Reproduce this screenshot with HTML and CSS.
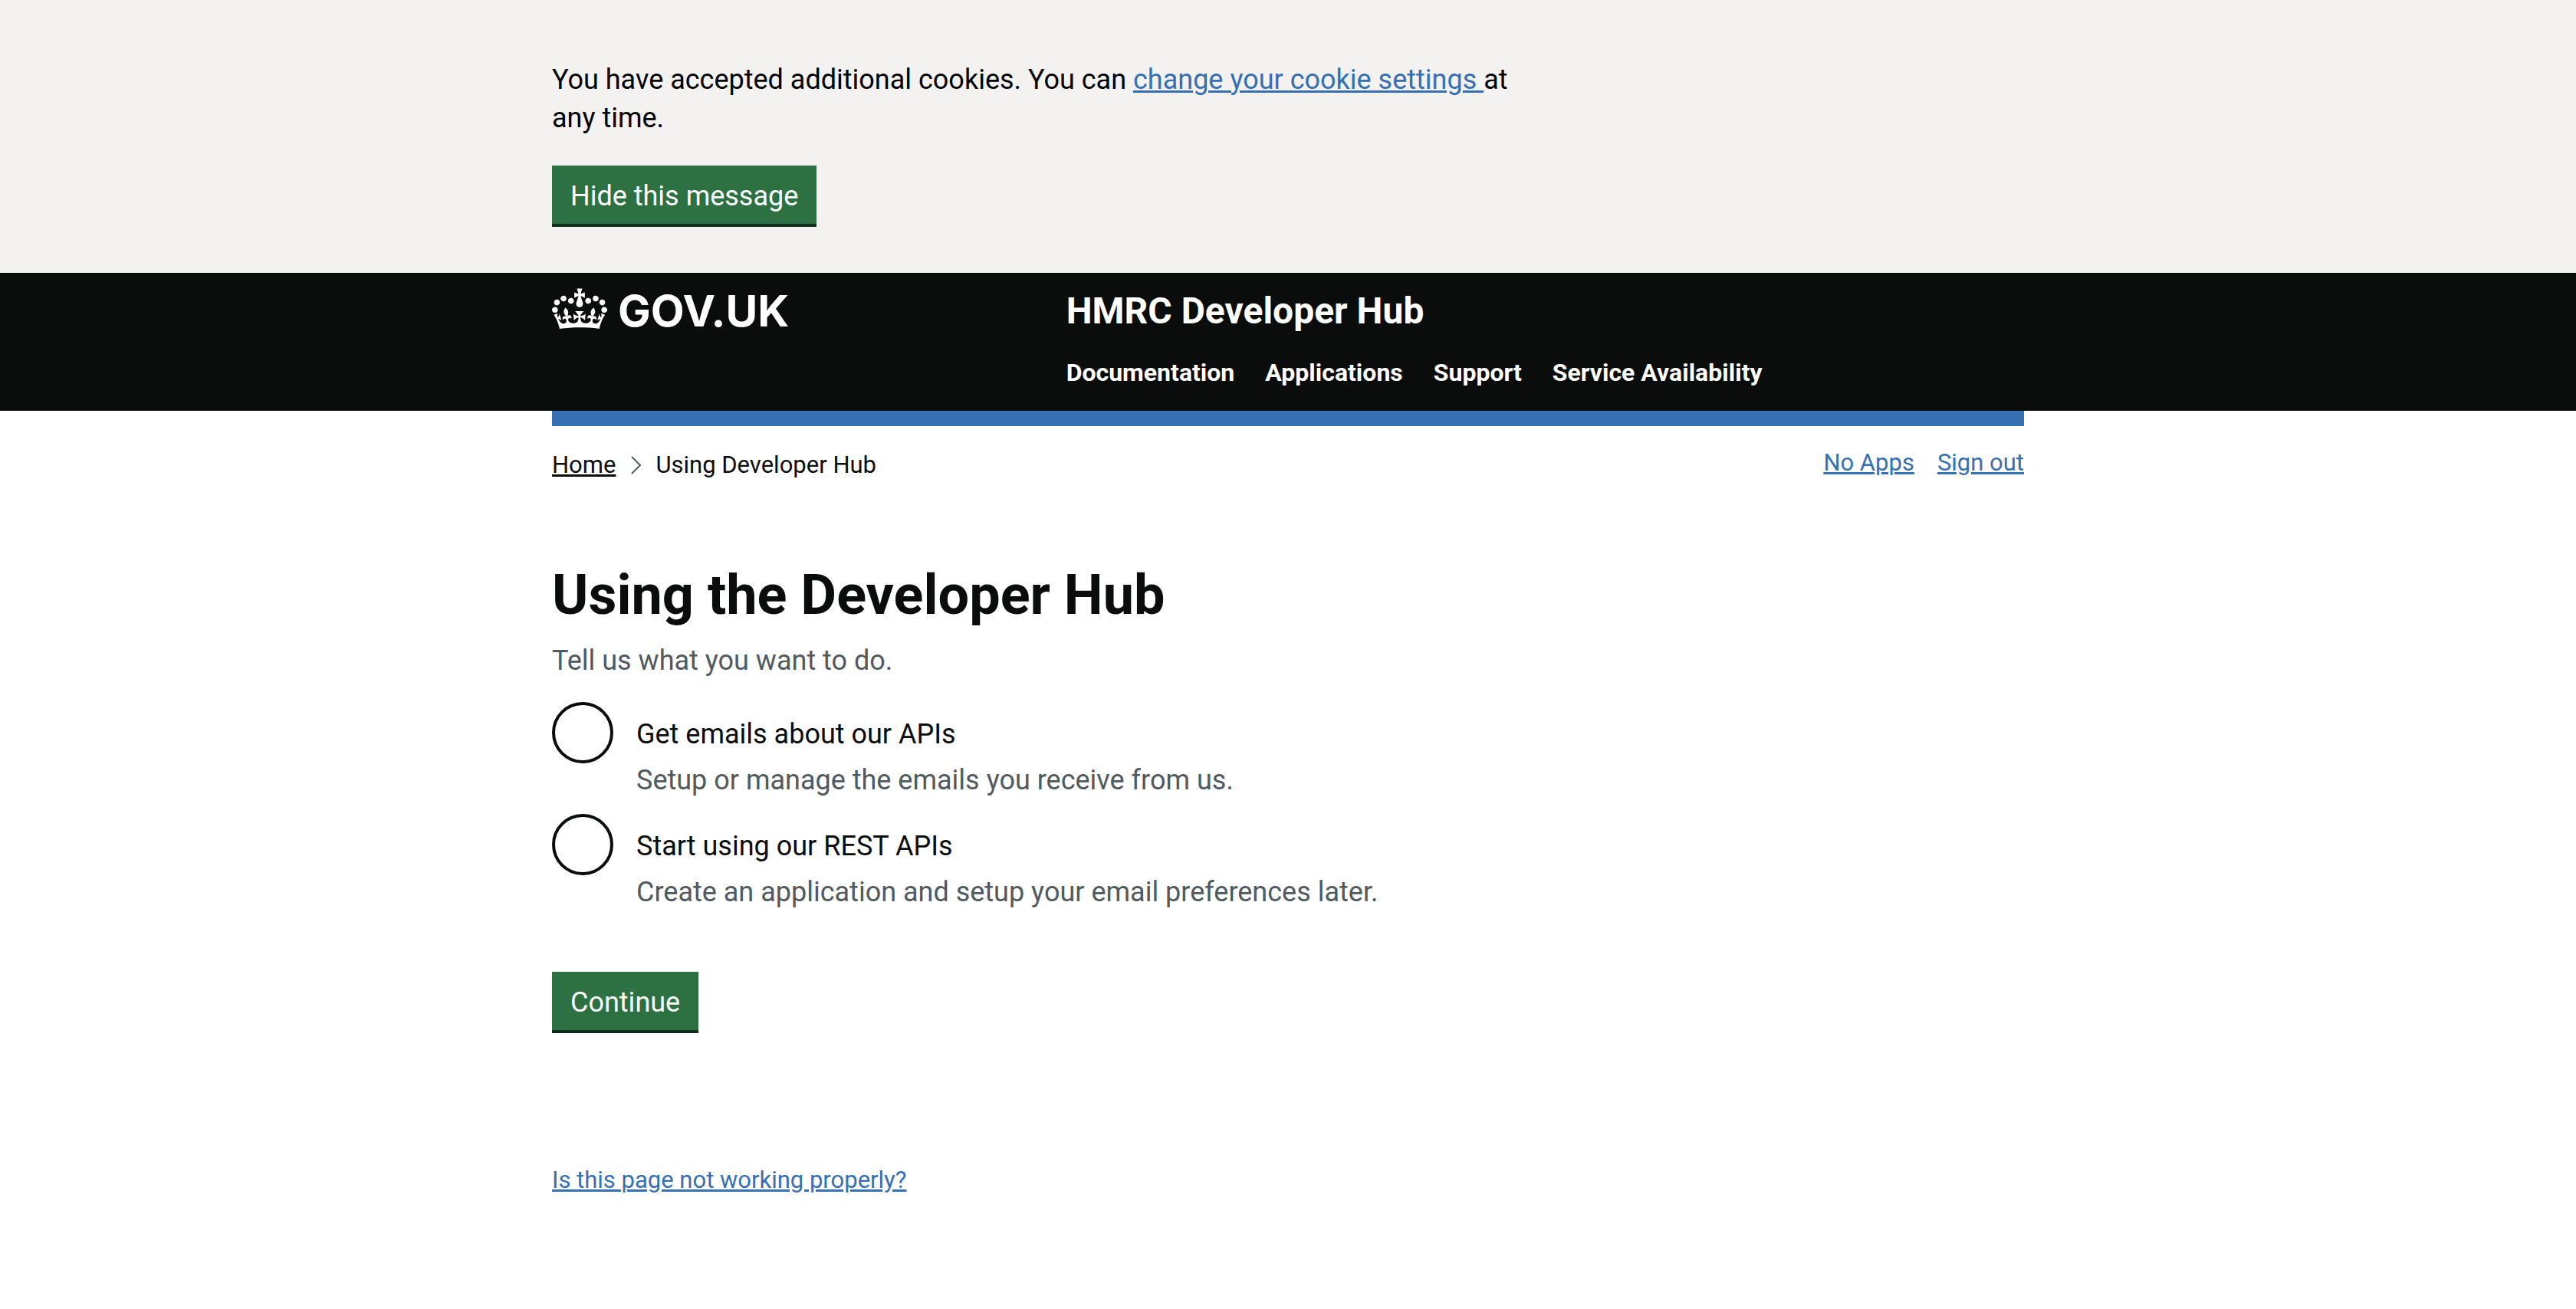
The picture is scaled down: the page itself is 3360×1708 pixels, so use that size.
FILE: index.html
```html
<!DOCTYPE html>
<html lang="en">
<head>
<meta charset="utf-8">
<meta name="viewport" content="width=device-width, initial-scale=1">
<title>Using Developer Hub - HMRC Developer Hub - GOV.UK</title>
<link rel="stylesheet" href="styles.css">
</head>
<body>
<section class="cookie-banner" aria-label="Cookies">
  <div class="container">
    <p class="cookie-message">You have accepted additional cookies. You can <a class="link" href="#cookies">change your cookie settings </a>at any time.</p>
    <button class="button" type="button">Hide this message</button>
  </div>
</section>

<header class="header">
  <div class="container header-grid">
    <a class="logo" href="#govuk">
      <svg class="crown" viewBox="0 0 132 97" aria-hidden="true" focusable="false"><path fill="currentColor" d="M25 30.2c3.5 1.5 7.7-.2 9.1-3.7 1.5-3.6-.2-7.8-3.9-9.2-3.6-1.4-7.6.3-9.1 3.9-1.4 3.5.3 7.5 3.9 9zM9 39.5c3.6 1.5 7.8-.2 9.2-3.7 1.5-3.6-.2-7.8-3.9-9.1-3.6-1.5-7.6.2-9.1 3.8-1.4 3.5.3 7.5 3.8 9zM4.4 57.2c3.5 1.5 7.7-.2 9.1-3.8 1.5-3.6-.2-7.7-3.9-9.1-3.5-1.5-7.6.3-9.1 3.8-1.4 3.5.3 7.6 3.9 9.1zm38.3-21.4c3.5 1.5 7.7-.2 9.1-3.8 1.5-3.6-.2-7.7-3.9-9.1-3.6-1.5-7.6.3-9.1 3.8-1.3 3.6.4 7.7 3.9 9.1zm64.4-5.6c-3.6 1.5-7.8-.2-9.1-3.7-1.5-3.6.2-7.8 3.8-9.2 3.6-1.4 7.7.3 9.2 3.9 1.3 3.5-.4 7.5-3.9 9zm15.9 9.3c-3.6 1.5-7.7-.2-9.1-3.7-1.5-3.6.2-7.8 3.7-9.1 3.6-1.5 7.7.2 9.2 3.8 1.5 3.5-.3 7.5-3.8 9zm4.7 17.7c-3.6 1.5-7.8-.2-9.2-3.8-1.5-3.6.2-7.7 3.9-9.1 3.6-1.5 7.7.3 9.2 3.8 1.3 3.5-.4 7.6-3.9 9.1zM89.3 35.8c-3.6 1.5-7.8-.2-9.2-3.8-1.4-3.6.2-7.7 3.9-9.1 3.6-1.5 7.7.3 9.2 3.8 1.4 3.6-.3 7.7-3.9 9.1zM69.7 17.7l8.9 4.7V9.3l-8.9 2.8c-.2-.3-.5-.6-.9-.9L72.4 0H59.6l3.5 11.2c-.3.3-.6.5-.9.9l-8.8-2.8v13.1l8.8-4.7c.3.3.6.7.9.9l-5 15.4v.1c-.2.8-.4 1.6-.4 2.4 0 4.1 3.1 7.5 7 8.1h.2c.3 0 .7.1 1 .1.4 0 .7 0 1-.1h.2c4-.6 7.1-4.1 7.1-8.1 0-.8-.1-1.7-.4-2.4V34l-5.1-15.4c.4-.2.7-.6 1-.9zM66 92.8c16.9 0 32.8 1.1 47.1 3.2 4-16.9 8.9-26.7 14-33.5l-9.6-3.4c1 4.9 1.1 7.2 0 10.2-1.5-1.4-3-4.3-4.2-8.7L108.6 76c2.8-2 5-3.2 7.5-3.3-4.4 9.4-10 11.9-13.6 11.2-4.3-.8-6.3-4.6-5.6-7.9 1-4.7 5.7-5.9 8-.5 4.3-8.7-3-11.4-7.6-8.8 7.1-7.2 7.9-13.5 2.1-21.1-8 6.1-8.1 12.3-4.5 20.8-4.7-5.4-12.1-2.5-9.5 6.2 3.4-5.2 7.9-2 7.2 3.1-.6 4.3-6.4 7.8-13.5 7.2-10.3-.9-10.9-8-11.2-13.8 2.5-.5 7.1 1.8 11 7.3L80.2 60c-4.1 4.4-8 5.3-12.3 5.4 1.4-4.4 8-11.6 8-11.6H55.5s6.4 7.2 7.9 11.6c-4.2-.1-8-1-12.3-5.4l1.4 16.4c3.9-5.5 8.5-7.7 10.9-7.3-.3 5.8-.9 12.8-11.1 13.8-7.2.6-12.9-2.9-13.5-7.2-.7-5 3.8-8.3 7.1-3.1 2.7-8.7-4.6-11.6-9.4-6.2 3.7-8.5 3.6-14.7-4.6-20.8-5.8 7.6-5 13.9 2.2 21.1-4.7-2.6-11.9.1-7.7 8.8 2.3-5.5 7.1-4.2 8.1.5.7 3.3-1.3 7.1-5.7 7.9-3.5.7-9-1.8-13.5-11.2 2.5.1 4.7 1.3 7.5 3.3l-4.7-15.4c-1.2 4.4-2.7 7.2-4.3 8.7-1.1-3-.9-5.3 0-10.2l-9.5 3.4c5 6.9 9.9 16.7 14 33.5 14.8-2.1 30.8-3.2 47.7-3.2z"/></svg>
      <span>GOV.UK</span>
    </a>
    <div class="header-content">
      <a class="service-name" href="#hub">HMRC Developer Hub</a>
      <nav aria-label="Main menu">
        <ul class="main-nav">
          <li><a href="#documentation">Documentation</a></li>
          <li><a href="#applications">Applications</a></li>
          <li><a href="#support">Support</a></li>
          <li><a href="#availability">Service Availability</a></li>
        </ul>
      </nav>
    </div>
  </div>
</header>

<div class="container page">
  <div class="top-row">
    <nav aria-label="Breadcrumb">
      <ol class="breadcrumbs">
        <li><a href="#home">Home</a></li>
        <li>
          <svg class="chevron" viewBox="0 0 14 24" aria-hidden="true" focusable="false"><path d="M1 1l11 11L1 23" fill="none" stroke="currentColor" stroke-width="2"/></svg>
          Using Developer Hub
        </li>
      </ol>
    </nav>
    <nav aria-label="Account">
      <ul class="user-nav">
        <li><a class="link" href="#apps">No Apps</a></li>
        <li><a class="link" href="#signout">Sign out</a></li>
      </ul>
    </nav>
  </div>

  <main>
    <h1 id="title">Using the Developer Hub</h1>
    <form>
      <p class="hint intro" id="intro">Tell us what you want to do.</p>
      <div class="radios" role="radiogroup" aria-labelledby="title" aria-describedby="intro">
        <div class="radio-item">
          <input class="radio" type="radio" id="emails" name="choice" value="emails" aria-describedby="emails-hint">
          <div class="radio-text">
            <label for="emails">Get emails about our APIs</label>
            <div class="hint" id="emails-hint">Setup or manage the emails you receive from us.</div>
          </div>
        </div>
        <div class="radio-item">
          <input class="radio" type="radio" id="rest" name="choice" value="rest" aria-describedby="rest-hint">
          <div class="radio-text">
            <label for="rest">Start using our REST APIs</label>
            <div class="hint" id="rest-hint">Create an application and setup your email preferences later.</div>
          </div>
        </div>
      </div>
      <button class="button" type="submit">Continue</button>
    </form>
    <p class="report"><a class="link" href="#report">Is this page not working properly?</a></p>
  </main>
</div>
</body>
</html>
```
FILE: styles.css
```css
* {
  box-sizing: border-box;
}

body {
  margin: 0;
  background: #fff;
  color: #0b0c0c;
  font: 36px/50px Roboto, "Liberation Sans", sans-serif;
}

p,
h1,
ul,
ol {
  margin: 0;
  padding: 0;
}

ul,
ol {
  list-style: none;
}

a {
  text-decoration-thickness: 3px;
  text-underline-offset: 2px;
}

.link {
  color: #3670b3;
}

.container {
  max-width: 1920px;
  margin: 0 auto;
}

.button {
  display: block;
  padding: 15px 24px 11px;
  border: 0;
  border-bottom: 4px solid #0f2e1b;
  border-radius: 0;
  background: #2d7042;
  color: #fff;
  font: inherit;
}

/* Cookie banner */
.cookie-banner {
  padding: 79px 0 60px;
  background: #f3f2f0;
  color: #000;
}

.cookie-message {
  max-width: 1270px;
  margin-bottom: 37px;
}

/* Header */
.header {
  padding: 20px 0 30px;
  background: #0b0c0c;
  color: #fff;
  font-weight: 700;
}

.header a {
  color: inherit;
  text-decoration: none;
}

.header-grid {
  display: grid;
  grid-template-columns: 1fr 2fr;
  column-gap: 46px;
}

.logo {
  display: flex;
  align-items: flex-start;
  gap: 14px;
  font: 700 57px/60px Inter, "Liberation Sans", sans-serif;
}

.crown {
  width: 72px;
  height: 54px;
}

.header-content {
  display: grid;
  row-gap: 30px;
  justify-items: start;
}

.service-name {
  font-size: 48px;
  line-height: 60px;
}

.main-nav {
  display: flex;
  flex-wrap: wrap;
  column-gap: 40px;
  font-size: 32px;
  line-height: 40px;
}

/* Page */
.page {
  border-top: 20px solid #3670b3;
}

.top-row {
  display: flex;
  justify-content: space-between;
  align-items: flex-start;
  padding-top: 30px;
  font-size: 31px;
}

.breadcrumbs {
  display: flex;
  gap: 20px;
  line-height: 42px;
}

.breadcrumbs li {
  display: flex;
  align-items: center;
  gap: 18px;
}

.breadcrumbs a {
  color: inherit;
}

.chevron {
  width: 14px;
  height: 24px;
  color: #505a5f;
}

.user-nav {
  display: flex;
  gap: 30px;
  line-height: 36px;
}

h1 {
  margin-top: 109px;
  font-size: 72px;
  line-height: 80px;
}

.hint {
  color: #505a5f;
}

.intro {
  margin: 20px 0 29px;
}

.radios {
  display: grid;
  row-gap: 19px;
  margin-bottom: 79px;
}

.radio-item {
  display: flex;
  align-items: flex-start;
  gap: 30px;
}

.radio {
  appearance: none;
  flex: none;
  width: 80px;
  height: 80px;
  margin: 0;
  border: 4px solid #0b0c0c;
  border-radius: 50%;
}

.radio:checked {
  background: radial-gradient(#0b0c0c 20px, transparent 21px);
}

.radio-text {
  display: grid;
  row-gap: 10px;
  padding-top: 17px;
}

.report {
  margin: 172px 0 0;
  font-size: 31px;
  line-height: 40px;
}
```
